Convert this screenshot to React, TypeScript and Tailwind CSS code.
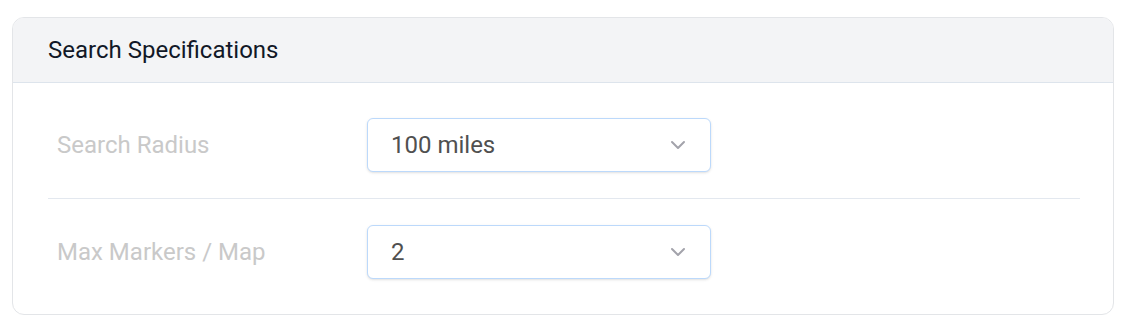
import { ChevronDown } from "lucide-react";

const ROWS = [
  { label: "Search Radius", value: "100 miles" },
  { label: "Max Markers / Map", value: "2" },
];

export default function App() {
  return (
    <div className="bg-white pl-3 pr-2 pt-[17px] pb-3 font-['Roboto',sans-serif]">
      <div className="overflow-hidden rounded-xl border border-[#e3e5e8] bg-white">
        <div className="flex h-[65px] items-center border-b border-[#dde4ec] bg-[#f3f4f6] px-[35px]">
          <h2 className="text-[24px] text-[#111827]">Search Specifications</h2>
        </div>
        <div className="pl-[35px] pr-[33px] pt-[9px] pb-[9px]">
          {ROWS.map((row, i) => (
            <div
              key={row.label}
              className={`flex items-center py-[26px] ${
                i < ROWS.length - 1 ? "border-b border-[#e3e8ef]" : ""
              }`}
            >
              <div className="w-[319px] pl-[9px] text-[24px] text-[#c9c9c9]">{row.label}</div>
              <div className="flex h-[54px] w-[344px] items-center justify-between rounded-md border border-[#bcd9fb] bg-white pl-[23px] pr-5 shadow-sm">
                <span className="text-[24px] text-[#505050]">{row.value}</span>
                <ChevronDown className="h-6 w-6 text-[#a3a3ab]" strokeWidth={2} />
              </div>
            </div>
          ))}
        </div>
      </div>
    </div>
  );
}
